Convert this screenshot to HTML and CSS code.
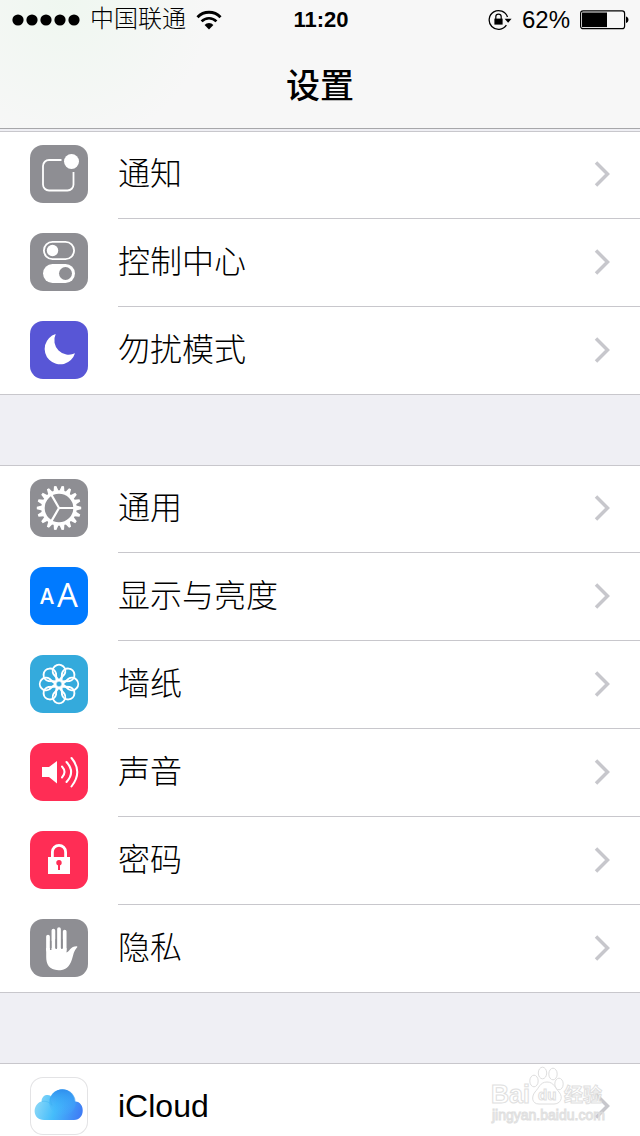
FILE: index.html
```html
<!DOCTYPE html>
<html lang="zh-CN">
<head>
    <meta charset="UTF-8">
    <meta name="viewport" content="width=device-width, initial-scale=1.0">
    <title>设置</title>
    <link rel="stylesheet" href="styles.css">
</head>
<body>
    <div class="screen">
        <header class="header">
            <div class="status">
                <div class="status-left">
                    <svg class="signal" width="68" height="12" viewBox="0 0 68 12">
                        <circle cx="6" cy="6" r="5.6"/>
                        <circle cx="20" cy="6" r="5.6"/>
                        <circle cx="34" cy="6" r="5.6"/>
                        <circle cx="48" cy="6" r="5.6"/>
                        <circle cx="62" cy="6" r="5.6"/>
                    </svg>
                    <span class="carrier">中国联通</span>
                    <svg class="wifi" width="26" height="20" viewBox="0 0 26 20">
                        <path d="M1.500 7.200a16 16 0 0 1 23 0" fill="none" stroke="#000" stroke-width="2.9"/>
                        <path d="M5.600 11.400a10.300 10.300 0 0 1 14.800 0" fill="none" stroke="#000" stroke-width="2.700"/>
                        <path d="M13 19.500l-4.400-4.500a6 6 0 0 1 8.800 0z"/>
                    </svg>
                </div>
                <time class="clock">11:20</time>
                <div class="status-right">
                    <svg width="24" height="22" viewBox="0 0 24 22">
                        <path d="M19.500 8A9.400 9.400 0 1 0 18.400 16.200" fill="none" stroke="#000" stroke-width="1.300"/>
                        <path d="M16.600 9.800h7l-3.500 4z"/>
                        <rect x="6.400" y="9.600" width="8.200" height="6"/>
                        <path d="M7.800 10V7.800a2.700 2.700 0 0 1 5.400 0V10" fill="none" stroke="#000" stroke-width="1.200"/>
                    </svg>
                    <span class="percent">62%</span>
                    <svg width="50" height="20" viewBox="0 0 50 20">
                        <rect x=".6" y=".9" width="44" height="17.800" rx="2.500" fill="none" stroke="#000" stroke-width="1.200"/>
                        <rect x="2" y="2.500" width="25" height="14.600"/>
                        <path d="M46 6.500c3.300 1 3.300 5.600 0 6.600z"/>
                    </svg>
                </div>
            </div>
            <h1 class="title">设置</h1>
        </header>

        <main class="list">
            <ul class="group">
                <li><a href="#" class="row">
                    <svg class="icon gray" viewBox="0 0 58 58">
                        <path d="M31.500 15H19a6 6 0 0 0-6 6v18.500a6 6 0 0 0 6 6h18.500a6 6 0 0 0 6-6V27" fill="none" stroke="#fff" stroke-width="1.800"/>
                        <circle cx="41.500" cy="16.500" r="7.500" fill="#fff"/>
                    </svg>
                    <span class="cell"><span class="label">通知</span><svg class="arrow" viewBox="0 0 16 26"><path d="M2 1.500L13.500 13 2 24.500"/></svg></span>
                </a></li>
                <li><a href="#" class="row">
                    <svg class="icon gray" viewBox="0 0 58 58">
                        <rect x="13.900" y="8.900" width="30.200" height="17.200" rx="8.600" fill="none" stroke="#fff" stroke-width="1.800"/>
                        <circle cx="22.500" cy="17.500" r="5.700" fill="#fff"/>
                        <rect x="13" y="31" width="32" height="19" rx="9.500" fill="#fff"/>
                        <circle cx="35.500" cy="40.500" r="6.500" fill="#8e8e93"/>
                    </svg>
                    <span class="cell"><span class="label">控制中心</span><svg class="arrow" viewBox="0 0 16 26"><path d="M2 1.500L13.500 13 2 24.500"/></svg></span>
                </a></li>
                <li><a href="#" class="row">
                    <svg class="icon purple" viewBox="0 0 58 58">
                        <path d="M25.700 13A15.500 15.500 0 1 0 45 32.300A14.500 14.500 0 0 1 25.700 13z" fill="#fff"/>
                    </svg>
                    <span class="cell"><span class="label">勿扰模式</span><svg class="arrow" viewBox="0 0 16 26"><path d="M2 1.500L13.500 13 2 24.500"/></svg></span>
                </a></li>
            </ul>

            <ul class="group">
                <li><a href="#" class="row">
                    <svg class="icon gray" viewBox="0 0 58 58">
                        <defs>
                            <!-- two opposite teeth of the gear -->
                            <path id="teeth" d="M-2.500-17L-1.200-22.200H1.200L2.500-17zM-2.500 17L-1.200 22.200H1.200L2.500 17z" fill="#fff"/>
                        </defs>
                        <g transform="translate(29 29)">
                            <use href="#teeth" transform="rotate(10)"/>
                            <use href="#teeth" transform="rotate(30)"/>
                            <use href="#teeth" transform="rotate(50)"/>
                            <use href="#teeth" transform="rotate(70)"/>
                            <use href="#teeth" transform="rotate(90)"/>
                            <use href="#teeth" transform="rotate(110)"/>
                            <use href="#teeth" transform="rotate(130)"/>
                            <use href="#teeth" transform="rotate(150)"/>
                            <use href="#teeth" transform="rotate(170)"/>
                            <circle r="16" fill="none" stroke="#fff" stroke-width="3.400"/>
                            <path d="M0 0H16M0 0L-8-13.860M0 0L-8 13.860" fill="none" stroke="#fff" stroke-width="2.200"/>
                        </g>
                    </svg>
                    <span class="cell"><span class="label">通用</span><svg class="arrow" viewBox="0 0 16 26"><path d="M2 1.500L13.500 13 2 24.500"/></svg></span>
                </a></li>
                <li><a href="#" class="row">
                    <svg class="icon blue" viewBox="0 0 58 58">
                        <text class="small-a" x="10" y="37">A</text>
                        <text class="big-a" x="27" y="40">A</text>
                    </svg>
                    <span class="cell"><span class="label">显示与亮度</span><svg class="arrow" viewBox="0 0 16 26"><path d="M2 1.500L13.500 13 2 24.500"/></svg></span>
                </a></li>
                <li><a href="#" class="row">
                    <svg class="icon cyan" viewBox="0 0 58 58">
                        <defs>
                            <path id="petal" d="M0-3.500L-5.300-9.500A6.300 6.300 0 1 1 5.300-9.500z" fill="none" stroke="#fff" stroke-width="1.900"/>
                        </defs>
                        <g transform="translate(29 29)">
                            <use href="#petal"/>
                            <use href="#petal" transform="rotate(45)"/>
                            <use href="#petal" transform="rotate(90)"/>
                            <use href="#petal" transform="rotate(135)"/>
                            <use href="#petal" transform="rotate(180)"/>
                            <use href="#petal" transform="rotate(225)"/>
                            <use href="#petal" transform="rotate(270)"/>
                            <use href="#petal" transform="rotate(315)"/>
                            <circle r="3.500" fill="none" stroke="#fff" stroke-width="1.500"/>
                        </g>
                    </svg>
                    <span class="cell"><span class="label">墙纸</span><svg class="arrow" viewBox="0 0 16 26"><path d="M2 1.500L13.500 13 2 24.500"/></svg></span>
                </a></li>
                <li><a href="#" class="row">
                    <svg class="icon red" viewBox="0 0 58 58">
                        <path d="M12 24h7l8-6v22.500l-8-6.500h-7z" fill="#fff"/>
                        <path d="M32 23.500c3.200 3.500 3.200 7.500 0 11M36.500 19c6 6.500 6 13.500 0 20M41.500 15c7.500 9 7.500 19 0 28.500" fill="none" stroke="#fff" stroke-width="2" stroke-linecap="round"/>
                    </svg>
                    <span class="cell"><span class="label">声音</span><svg class="arrow" viewBox="0 0 16 26"><path d="M2 1.500L13.500 13 2 24.500"/></svg></span>
                </a></li>
                <li><a href="#" class="row">
                    <svg class="icon red" viewBox="0 0 58 58">
                        <rect x="18" y="26" width="22" height="17" fill="#fff"/>
                        <path d="M22.400 27v-6a6.600 6.600 0 0 1 13.200 0v6" fill="none" stroke="#fff" stroke-width="2.800"/>
                        <circle cx="29" cy="31.700" r="2.700" fill="#ff2d55"/>
                        <rect x="28" y="32" width="2" height="7" fill="#ff2d55"/>
                    </svg>
                    <span class="cell"><span class="label">密码</span><svg class="arrow" viewBox="0 0 16 26"><path d="M2 1.500L13.500 13 2 24.500"/></svg></span>
                </a></li>
                <li><a href="#" class="row">
                    <svg class="icon gray" viewBox="0 0 58 58">
                        <path d="M18 31V17.500M23.400 31V11.500M29 31V10M34.700 31V12.500" fill="none" stroke="#fff" stroke-width="3.700" stroke-linecap="round"/>
                        <path d="M16.200 29H36.500v4.500c3-1 4-6.500 10.500-6.300.8.500.1 1.300-.8 2.300-3 3.500-3.200 9-5.200 13.500-3 7-8 8.200-12.500 8.200C19 51 16.200 45 16.200 38z" fill="#fff"/>
                        <path d="M20.700 31V22M26.200 30V20M31.900 30V20" fill="none" stroke="#8e8e93" stroke-width="1.500"/>
                    </svg>
                    <span class="cell"><span class="label">隐私</span><svg class="arrow" viewBox="0 0 16 26"><path d="M2 1.500L13.500 13 2 24.500"/></svg></span>
                </a></li>
            </ul>

            <ul class="group">
                <li><a href="#" class="row">
                    <svg class="icon white" viewBox="0 0 58 58">
                        <defs>
                            <linearGradient id="sky" x1="0" x2="1" y1=".4" y2=".6">
                                <stop offset="0" stop-color="#8fd9f7"/>
                                <stop offset=".45" stop-color="#45bdfb"/>
                                <stop offset="1" stop-color="#3f7df5"/>
                            </linearGradient>
                            <linearGradient id="puff" x1="0" x2="0" y1="0" y2="1">
                                <stop offset="0" stop-color="#2f8eee"/>
                                <stop offset="1" stop-color="#43bcff" stop-opacity="0"/>
                            </linearGradient>
                        </defs>
                        <path d="M14 43C2 43 2 27 11.500 24.500C12 18 17 17 21 19C26 9 43 10 45 24.500C55 24 56 43 44 43z" fill="url(#sky)"/>
                        <circle cx="32.500" cy="25.500" r="13.200" fill="url(#puff)"/>
                        <path d="M12 24.500c4-1 8 1 10 4M20.500 20c-.500 3 0 5 1.500 8" fill="none" stroke="#35aef0" stroke-opacity=".4"/>
                    </svg>
                    <span class="cell"><span class="label">iCloud</span><svg class="arrow" viewBox="0 0 16 26"><path d="M2 1.500L13.500 13 2 24.500"/></svg></span>
                </a></li>
            </ul>
        </main>

        <svg class="watermark" viewBox="0 0 124 60">
            <g fill="#fff" stroke="#dcdcdc">
                <ellipse cx="44" cy="15" rx="4.200" ry="5.800"/>
                <ellipse cx="52.500" cy="7" rx="4.200" ry="5.800"/>
                <ellipse cx="63" cy="8" rx="4.200" ry="5.800"/>
                <ellipse cx="69" cy="18" rx="4.200" ry="5.800"/>
                <path d="M57 16c7 0 8 6 12 10 5 6 1 12-5 12H49c-7 0-8-7-4-12 4-4 5-10 12-10z"/>
                <text class="mark" x="1" y="37">Bai</text>
                <text class="mark-du" x="48" y="34">du</text>
                <text class="mark-cn" x="74" y="36">经验</text>
                <text class="mark-url" x="2" y="54">jingyan.baidu.com</text>
            </g>
        </svg>
    </div>
</body>
</html>
```

FILE: styles.css
```css
:root {
  --white: #ffffff;
  --black: #000000;
  --page: #efeff4;
  --line: #c8c7cc;
  --gray: #8e8e93;
  --sm: 24px;
  --md: 32px;
  --lg: 34px;
}
* {
  box-sizing: border-box;
}
body {
  margin: 0;
  font-family: "Liberation Sans", "Noto Sans CJK SC", sans-serif;
  color: var(--black);
  background-color: var(--page);
}
.screen {
  position: relative;
  display: flex;
  flex-direction: column;
  height: 100vh;
  overflow: hidden;
}

/* Status bar and title */
.header {
  flex: none;
  background: radial-gradient(circle at 10% 0, #eff7f0, #f7f7f7 25%);
  border-bottom: 1px solid #a7a7aa;
}
.status {
  display: grid;
  grid-template-columns: 1fr auto 1fr;
  align-items: center;
  height: 40px;
  padding: 0 10px 0 12px;
  font-size: var(--sm);
}
.status-left, .status-right {
  display: flex;
  align-items: center;
  gap: 10px;
}
.status-right {
  justify-content: flex-end;
}
.carrier {
  font-weight: 300;
  line-height: 32px;
  padding-bottom: 2px;
}
.clock {
  font-size: 22px;
  font-weight: bold;
}
.title {
  margin: 0;
  height: 88px;
  font-size: var(--lg);
  font-weight: 500;
  line-height: 92px;
  text-align: center;
}

/* Settings list */
.list {
  flex: 1;
  min-height: 0;
  padding-top: 2px;
  overflow: hidden;
}
.group {
  margin: 0 0 70px;
  padding: 0;
  list-style: none;
  background-color: var(--white);
  box-shadow: inset 0 1px var(--line), inset 0 -1px var(--line);
}
.row {
  display: flex;
  gap: 30px;
  height: 88px;
  padding-left: 30px;
  color: inherit;
  text-decoration: none;
}
.icon {
  flex: none;
  width: 58px;
  height: 58px;
  margin-top: 14px;
  border-radius: 13px;
}
.gray {
  background-color: var(--gray);
}
.purple {
  background-color: #5856d6;
}
.blue {
  background-color: #007aff;
}
.cyan {
  background-color: #34aadc;
}
.red {
  background-color: #ff2d55;
}
.white {
  background-color: var(--white);
  box-shadow: inset 0 0 0 1px #e3e3e5;
}
.small-a, .big-a {
  fill: var(--white);
  font-family: "Open Sans", sans-serif;
}
.small-a {
  font-size: 21px;
  font-weight: 600;
}
.big-a {
  font-size: 33px;
}
.cell {
  flex: 1;
  display: flex;
  align-items: center;
  justify-content: space-between;
  padding: 0 30px 2px 0;
  border-bottom: 1px solid var(--line);
}
.group li:last-child .cell {
  border-bottom-color: transparent;
}
.label {
  font-size: var(--md);
  font-weight: 300;
  line-height: 40px;
}
.arrow {
  width: 16px;
  height: 26px;
  fill: none;
  stroke: #c7c7cc;
  stroke-width: 3.5;
}

/* Site mark over the bottom right corner */
.watermark {
  position: absolute;
  right: 26px;
  bottom: 10px;
  width: 124px;
  height: 60px;
  opacity: 0.9;
  font-family: "Liberation Sans", "Noto Sans CJK SC", sans-serif;
  font-weight: bold;
}
.mark {
  font-size: 25px;
}
.mark-du {
  font-size: 15px;
}
.mark-cn {
  font-size: 19px;
}
.mark-url {
  font-size: 14px;
  font-weight: normal;
}
```
